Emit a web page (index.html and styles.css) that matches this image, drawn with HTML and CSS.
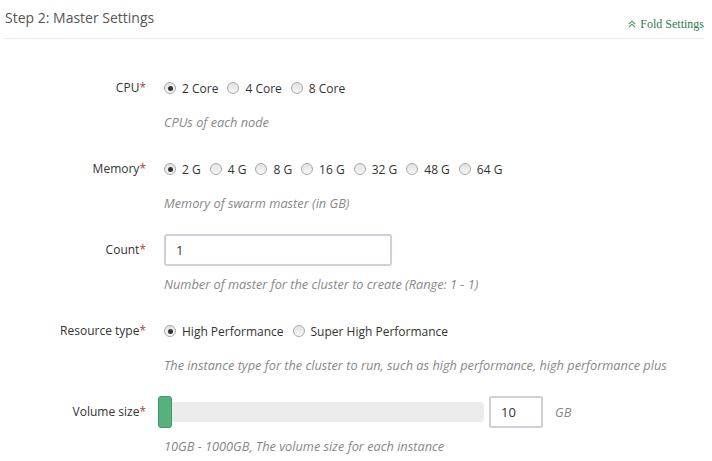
FILE: index.html
```html
<!DOCTYPE html>
<html>
<head>
<meta charset="utf-8">
<link rel="stylesheet" href="styles.css">
</head>
<body>
<div class="panel">
  <div class="panel-head">
    <h2 class="title">Step 2: Master Settings</h2>
    <a class="fold" href="#"><svg class="fold-icon" width="8" height="8" viewBox="0 0 8 8"><path d="M1 4 L4 1.2 L7 4 M1 7 L4 4.2 L7 7" fill="none" stroke="#5f8f6a" stroke-width="1.1"/></svg>Fold Settings</a>
  </div>

  <div class="form">
    <div class="group">
      <div class="label">CPU<span class="req">*</span></div>
      <div class="control radios">
        <span class="opt"><span class="radio checked"></span>2 Core</span>
        <span class="opt"><span class="radio"></span>4 Core</span>
        <span class="opt"><span class="radio"></span>8 Core</span>
      </div>
      <div class="help">CPUs of each node</div>
    </div>

    <div class="group">
      <div class="label">Memory<span class="req">*</span></div>
      <div class="control radios">
        <span class="opt"><span class="radio checked"></span>2 G</span>
        <span class="opt"><span class="radio"></span>4 G</span>
        <span class="opt"><span class="radio"></span>8 G</span>
        <span class="opt"><span class="radio"></span>16 G</span>
        <span class="opt"><span class="radio"></span>32 G</span>
        <span class="opt"><span class="radio"></span>48 G</span>
        <span class="opt"><span class="radio"></span>64 G</span>
      </div>
      <div class="help">Memory of swarm master (in GB)</div>
    </div>

    <div class="group">
      <div class="label">Count<span class="req">*</span></div>
      <div class="control">
        <input class="text-input count" type="text" value="1">
      </div>
      <div class="help">Number of master for the cluster to create (Range: 1 - 1)</div>
    </div>

    <div class="group">
      <div class="label">Resource type<span class="req">*</span></div>
      <div class="control radios">
        <span class="opt"><span class="radio checked"></span>High Performance</span>
        <span class="opt"><span class="radio"></span>Super High Performance</span>
      </div>
      <div class="help">The instance type for the cluster to run, such as high performance, high performance plus</div>
    </div>

    <div class="group">
      <div class="label">Volume size<span class="req">*</span></div>
      <div class="control slider-row">
        <div class="track"><span class="handle"></span></div>
        <input class="text-input volume" type="text" value="10">
        <span class="unit">GB</span>
      </div>
      <div class="help">10GB - 1000GB, The volume size for each instance</div>
    </div>
  </div>
</div>
</body>
</html>
```

FILE: styles.css
```css
html, body {
  margin: 0;
  padding: 0;
  background: #fff;
}
body {
  font-family: "Open Sans", "Noto Sans", sans-serif;
  font-size: 12px;
  color: #333;
}
.panel {
  padding: 0 8px 0 4px;
}
.panel-head {
  display: flex;
  justify-content: space-between;
  align-items: flex-end;
  height: 38px;
  border-bottom: 1px solid #ececec;
}
.title {
  margin: 0;
  padding: 0 0 0 1px;
  font-size: 14px;
  font-weight: normal;
  color: #555;
  line-height: 20px;
  align-self: flex-start;
  margin-top: 8px;
}
.fold {
  font-family: "Liberation Serif", "Times New Roman", serif;
  font-size: 12px;
  color: #2f7c4e;
  text-decoration: none;
  line-height: 14px;
  margin-bottom: 7px;
  display: flex;
  align-items: center;
}
.fold-icon {
  margin-right: 4px;
}
.form {
  padding-top: 33px;
}
.group {
  display: grid;
  grid-template-columns: 142px 1fr;
  column-gap: 18px;
  margin-bottom: 21px;
}
.label {
  height: 32px;
  line-height: 32px;
  text-align: right;
  color: #333;
}
.req {
  color: #c0392b;
}
.control {
  height: 32px;
  display: flex;
  align-items: center;
}
.radios .opt {
  display: inline-flex;
  align-items: center;
  margin-right: 9px;
  color: #333;
}
.radio {
  width: 10px;
  height: 10px;
  border: 1px solid #a9a9a9;
  border-radius: 50%;
  background: linear-gradient(#e2e2e2, #f7f7f7);
  margin-right: 6px;
  position: relative;
  box-sizing: content-box;
}
.radio.checked::after {
  content: "";
  position: absolute;
  left: 2.5px;
  top: 2.5px;
  width: 5px;
  height: 5px;
  border-radius: 50%;
  background: #333;
}
.help {
  grid-column: 2;
  margin-top: 8px;
  line-height: 20px;
  font-size: 12.75px;
  font-style: italic;
  color: #888;
}
.text-input {
  box-sizing: border-box;
  height: 32px;
  border: 2px solid #cfcde0;
  border-radius: 3px;
  font-family: "Open Sans", "Noto Sans", sans-serif;
  font-size: 13px;
  color: #333;
  padding: 0 10px;
  outline: none;
}
.count {
  width: 228px;
}
.track {
  position: relative;
  width: 320px;
  height: 20px;
  background: #ececec;
  border-radius: 3px;
}
.handle {
  position: absolute;
  left: -6px;
  top: -6px;
  width: 14px;
  height: 32px;
  box-sizing: border-box;
  background: #55b27f;
  border: 1px solid #3f9a68;
  border-radius: 3px;
}
.volume {
  width: 54px;
  margin-left: 5px;
}
.unit {
  margin-left: 12px;
  font-size: 12.75px;
  font-style: italic;
  color: #888;
}
```
